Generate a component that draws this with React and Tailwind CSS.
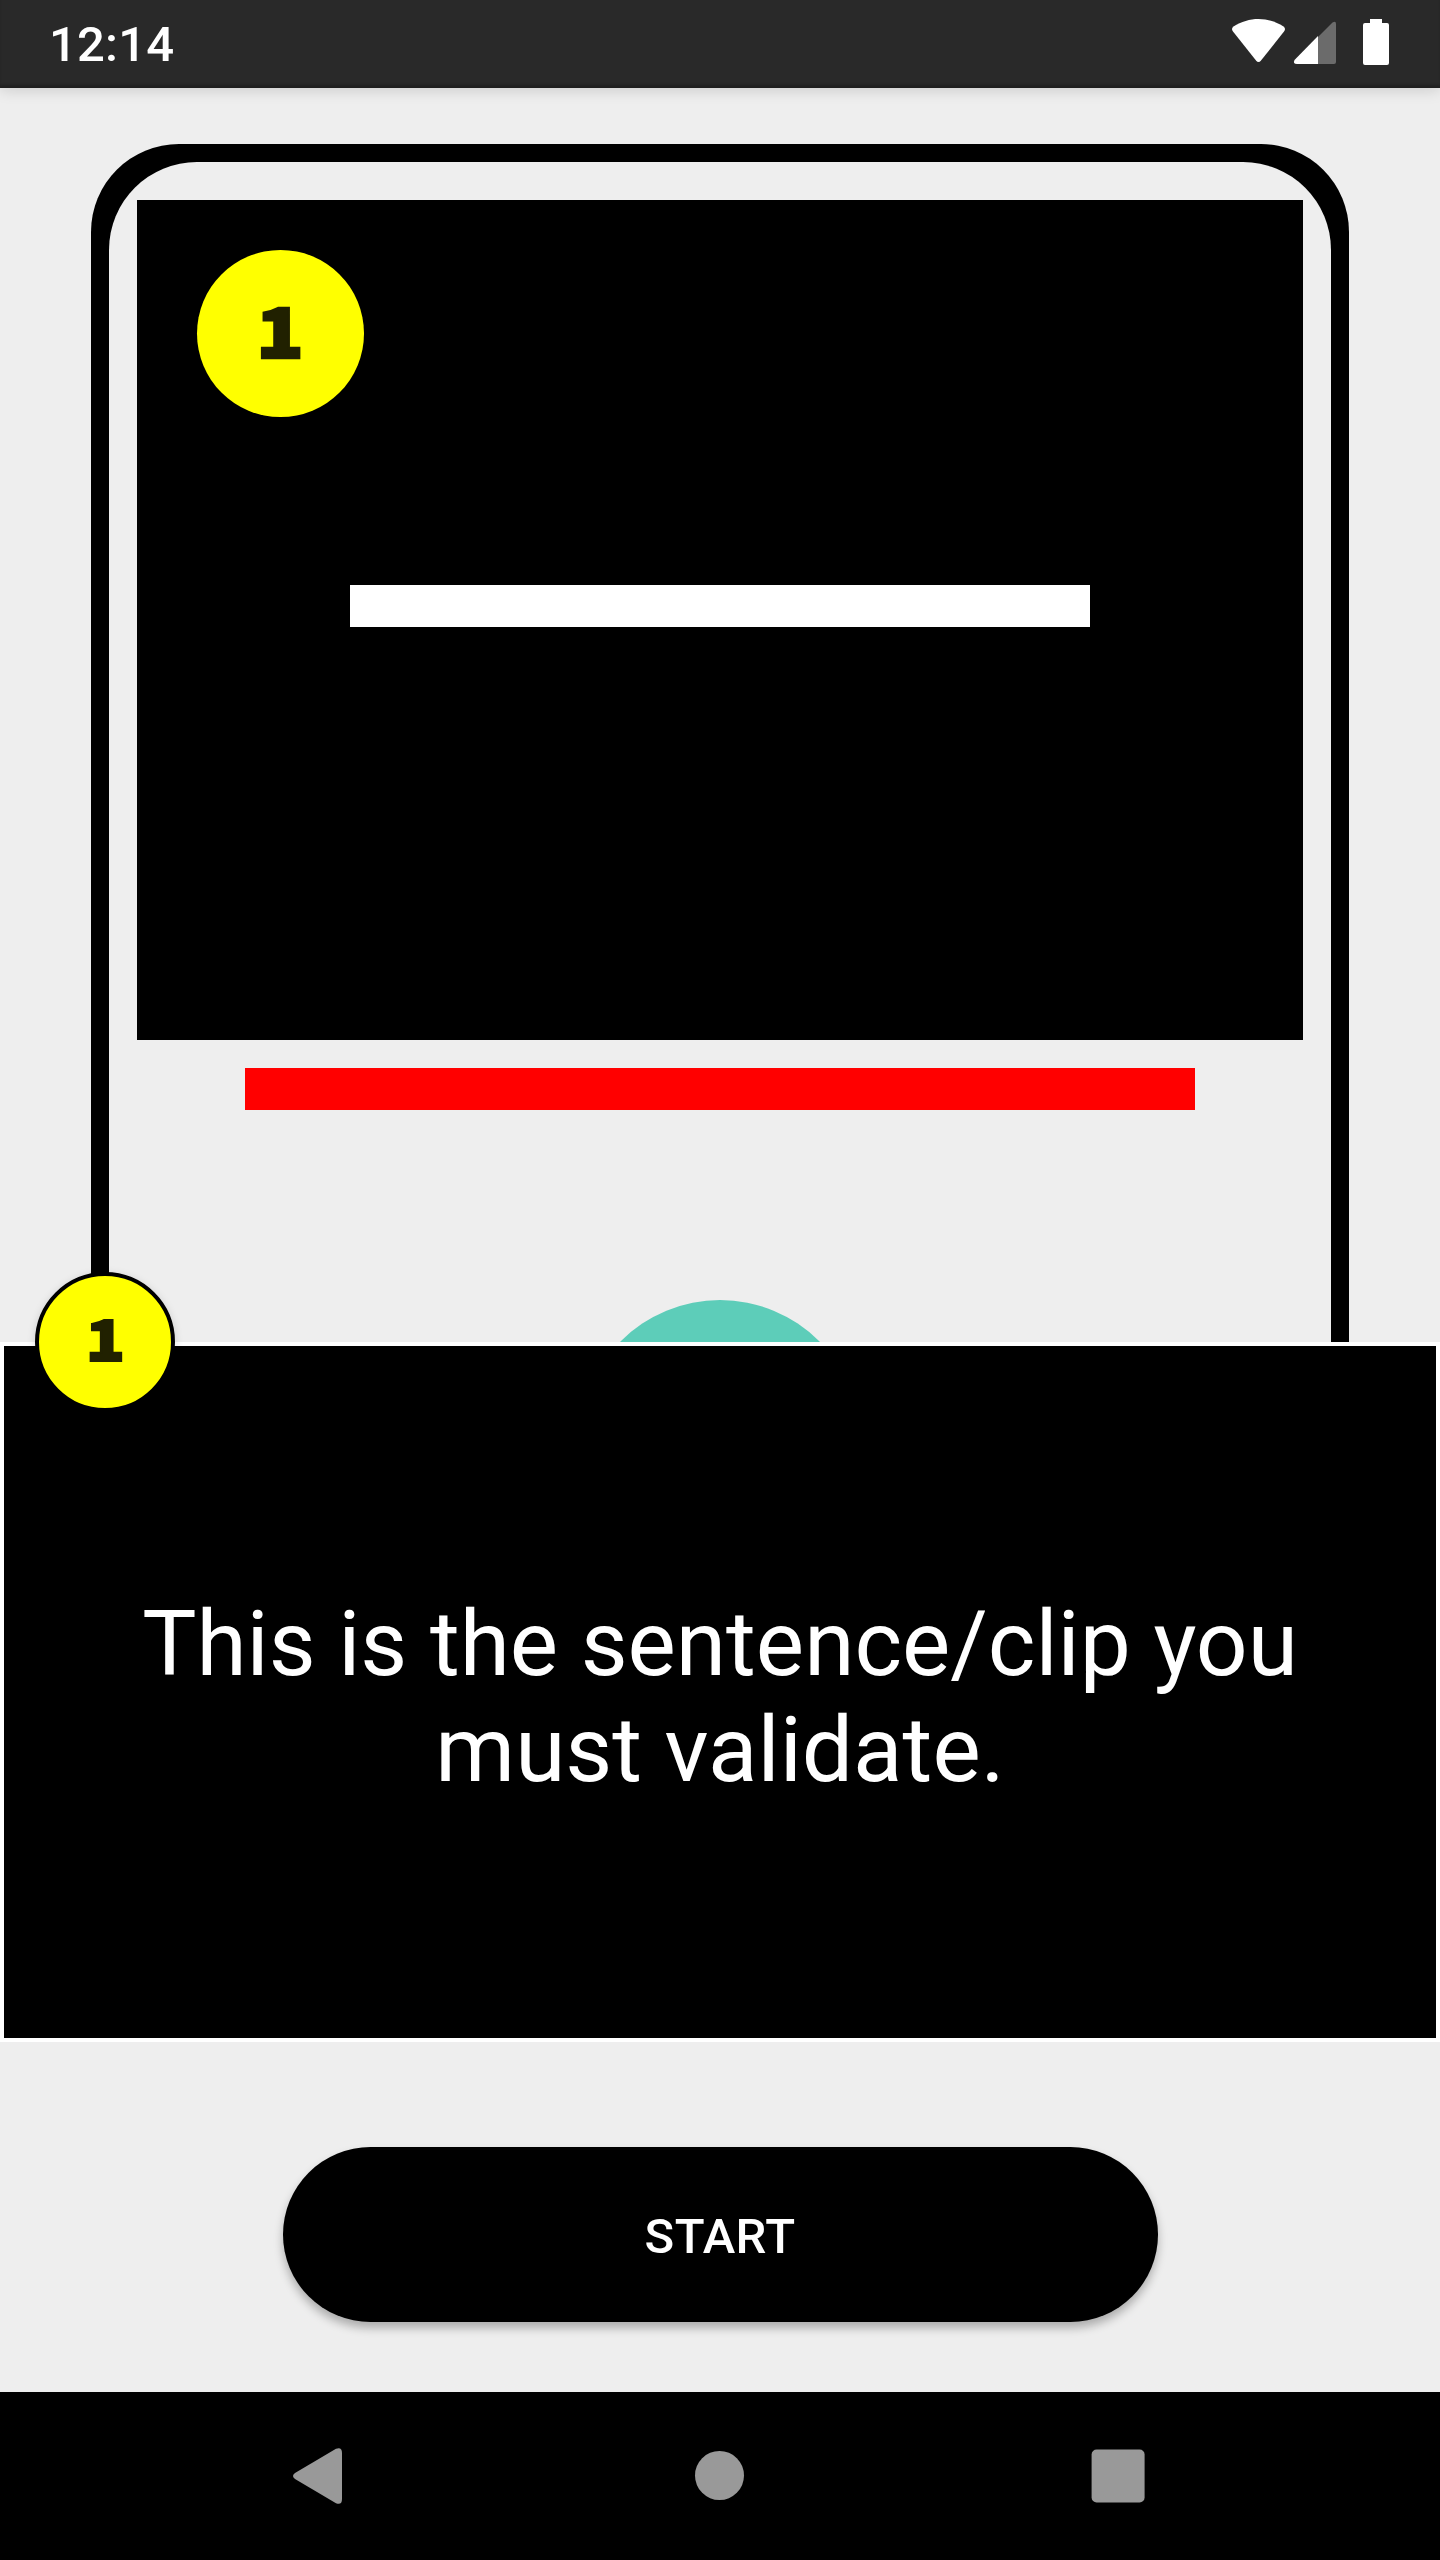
function StatusBar() {
  return (
    <header className="relative z-10 flex h-[88px] shrink-0 items-center justify-between bg-[#292929] pl-[49px] shadow-[inset_0_-4px_3px_-1px_#202020,0_2px_14px_rgba(0,0,0,0.15)]">
      <span className="text-[49px] leading-none font-medium tracking-[0.2px] text-white">12:14</span>
      <svg width="208" height="88" viewBox="0 0 208 88" fill="#fff" aria-hidden="true">
        <path d="M1 31.500Q-1.200 28.500 1.500 26.500C17 16.500 36 16.500 51.500 26.500Q54.200 28.500 52 31.500L29 60.500Q26.500 63.500 24 60.500Z" />
        <path d="M86 36V64H65Q60.500 64 62.500 60Z" />
        <path d="M86 37L100.500 22.600Q104 20.500 104 24V62Q104 64 102 64H86Z" fill="#6b6b6b" />
        <path d="M138 19H150V23H155Q157 23 157 25V63Q157 65 155 65H133Q131 65 131 63V25Q131 23 133 23H138Z" />
      </svg>
    </header>
  );
}

function PhonePreview() {
  return (
    <section className="flex h-[1254px] shrink-0 justify-center overflow-hidden pt-14">
      <div className="h-[1900px] w-[1258px] rounded-[88px] bg-black p-[18px]">
        <div className="flex h-full flex-col items-center rounded-[88px] bg-[#eee] pt-[38px]">
          <div className="flex h-[840px] w-[1166px] shrink-0 flex-col bg-black pt-[50px]">
            <div className="ml-[60px] flex size-[167px] items-center justify-center rounded-full bg-[#ff0] pb-[11px] font-['Noto_Sans_CJK_JP',sans-serif] text-[69px] leading-none font-black text-[#212100] [-webkit-text-stroke:2.5px_#212100]">
              <span className="scale-x-[1.13]">1</span>
            </div>
            <div className="mt-[168px] h-[42px] w-[740px] self-center bg-white" />
          </div>
          <div className="mt-7 h-[42px] w-[950px] shrink-0 bg-[#f00]" />
          <div className="mt-[190px] size-[280px] shrink-0 rounded-full bg-[#5dcdb9]" />
        </div>
      </div>
    </section>
  );
}

function Explanation() {
  return (
    <section className="relative flex h-[700px] shrink-0 items-center justify-center border-4 border-white bg-black">
      <div className="absolute -top-[74px] left-[31px] flex size-[140px] items-center justify-center rounded-full border-4 border-black bg-[#ff0] pb-[11px] font-['Noto_Sans_CJK_JP',sans-serif] text-[57px] leading-none font-black text-[#212100] shadow-[0_2px_8px_rgba(0,0,0,0.15)] [-webkit-text-stroke:2px_#212100]">
        <span className="scale-x-[1.13]">1</span>
      </div>
      <p className="w-[1200px] pt-2.5 text-center text-[91px] leading-[106px] text-white">
        This is the sentence/clip you must validate.
      </p>
    </section>
  );
}

function NavigationBar() {
  return (
    <nav className="flex h-[168px] shrink-0 bg-black">
      <svg width="1440" height="168" viewBox="0 0 1440 168" fill="#999" aria-hidden="true">
        <path d="M295 81L336 56.700Q342 54.500 342 61V107Q342 113.500 336 111.300L295 87Q291 84 295 81Z" />
        <circle cx="719.500" cy="83.500" r="24.500" />
        <rect x="1091.600" y="57.500" width="53" height="53" rx="5" />
      </svg>
    </nav>
  );
}

export default function App() {
  return (
    <div className="flex h-[2560px] w-[1440px] flex-col overflow-hidden bg-[#eee] font-[Roboto,sans-serif]">
      <StatusBar />
      <PhonePreview />
      <Explanation />
      <div className="flex h-[350px] shrink-0 justify-center pt-[105px]">
        <button className="h-[175px] w-[875px] rounded-full bg-black pt-[3px] text-[49px] leading-none font-medium tracking-[0.4px] text-white shadow-[0_6px_10px_rgba(0,0,0,0.28)]">
          START
        </button>
      </div>
      <NavigationBar />
    </div>
  );
}
